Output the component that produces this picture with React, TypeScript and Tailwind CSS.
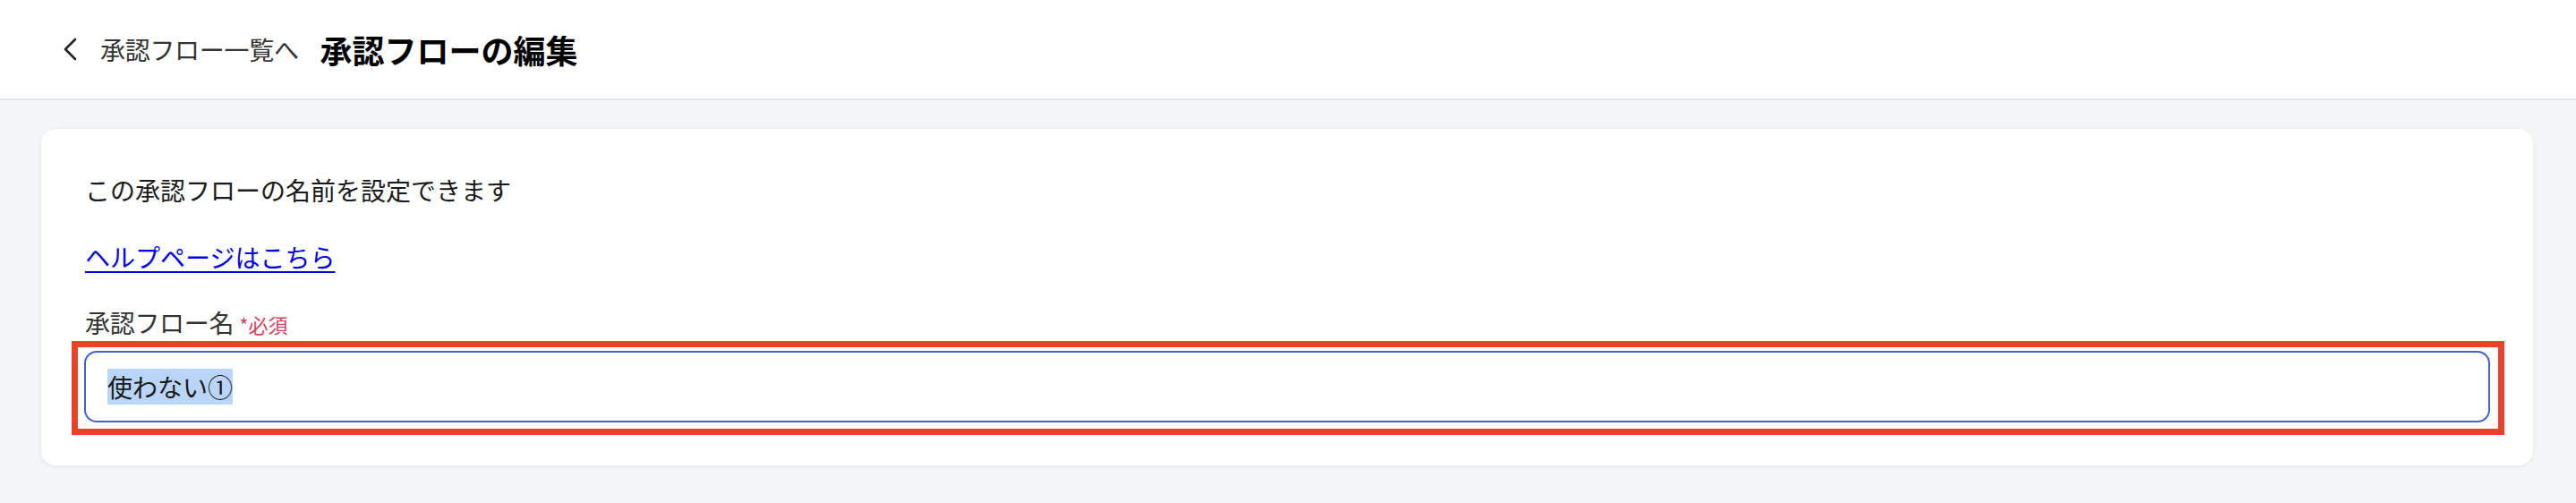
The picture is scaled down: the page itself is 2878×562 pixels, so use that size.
import React from "react";

const font = { fontFamily: '"Noto Sans CJK JP", "Noto Sans", sans-serif' };

function BackChevron() {
  return (
    <svg width="18" height="26" viewBox="0 0 18 26" fill="none" className="shrink-0">
      <polyline points="15,2 4,13 15,24" stroke="#222" strokeWidth="2.6" strokeLinecap="round" strokeLinejoin="round" />
    </svg>
  );
}

export default function App() {
  return (
    <div className="min-h-[562px] flex flex-col bg-[#f4f5f9]" style={font}>
      {/* header */}
      <header className="h-[112px] shrink-0 bg-white border-b-2 border-[#e4e5ea] flex items-center pl-[69px]">
        <button className="flex items-center gap-[25px] text-[#333]">
          <BackChevron />
          <span className="text-[28px] tracking-[-0.3px] leading-none">承認フロー一覧へ</span>
        </button>
        <h1 className="ml-[24px] text-[36px] font-bold leading-none text-black">承認フローの編集</h1>
      </header>

      {/* content */}
      <main className="flex-1 pt-[32px] pl-[46px] pr-[48px] pb-[44px]">
        <section className="bg-white rounded-[16px] shadow-[0_1px_4px_rgba(0,0,0,0.08)] pt-[50px] pb-[34px] flex flex-col">
          <p className="pl-[49px] text-[28px] leading-[36px] text-[#1a1a1a]">
            この承認フローの名前を設定できます
          </p>
          <div className="pl-[49px] mt-[39px]">
            <a
              href="#"
              className="text-[28px] leading-[36px] text-[#0000e6] underline decoration-[2px] underline-offset-[4px]"
            >
              ヘルプページはこちら
            </a>
          </div>
          <label className="pl-[49px] mt-[37px] flex items-baseline gap-[6px] leading-[36px]">
            <span className="text-[28px] tracking-[-0.3px] text-[#333]">承認フロー名</span>
            <span className="text-[22px] text-[#d6455d]">*必須</span>
          </label>
          <div className="ml-[34px] mr-[32px] mt-[1px] border-[7px] border-[#ea4228] pt-[4px] pl-[7px] pr-[9px] pb-[7px]">
            <div className="h-[80px] border-2 border-[#3d63d4] rounded-[14px] flex items-center pl-[24px]">
              <span className="bg-[#b9d5fa] text-[28px] leading-[40px] text-[#1a1a1a]">使わない①</span>
            </div>
          </div>
        </section>
      </main>
    </div>
  );
}
